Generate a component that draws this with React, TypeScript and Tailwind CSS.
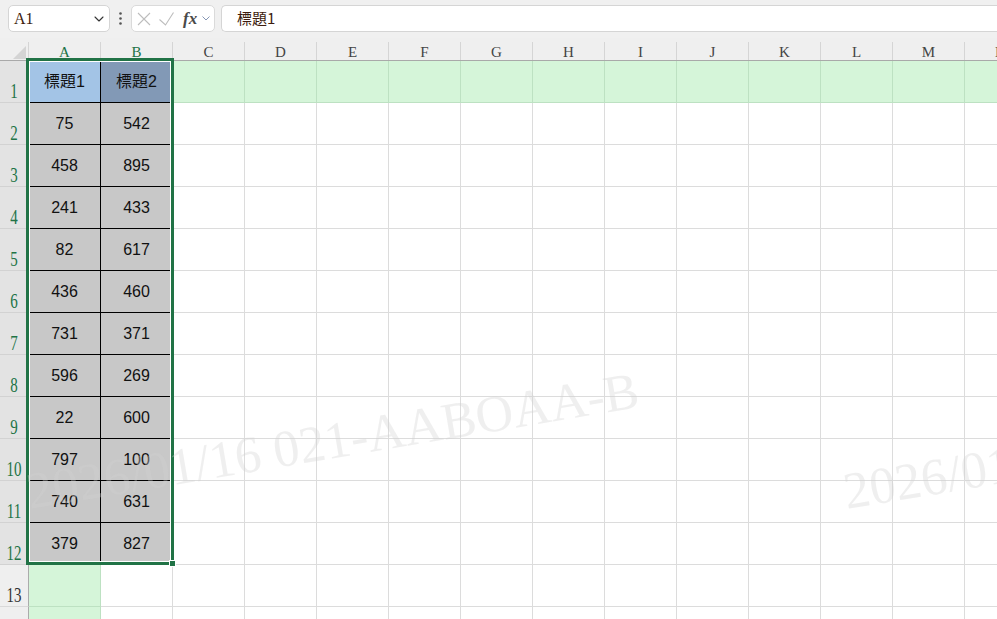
import React from 'react';
import { ChevronDown } from 'lucide-react';

const COLUMNS = ['A', 'B', 'C', 'D', 'E', 'F', 'G', 'H', 'I', 'J', 'K', 'L', 'M', 'N'];
const ROW_COUNT = 14;

// sheet contents, A1:B12
const values: string[][] = [
  ['標題1', '標題2'],
  ['75', '542'],
  ['458', '895'],
  ['241', '433'],
  ['82', '617'],
  ['436', '460'],
  ['731', '371'],
  ['596', '269'],
  ['22', '600'],
  ['797', '100'],
  ['740', '631'],
  ['379', '827'],
];

const SERIF = "font-['Liberation_Serif',serif]";

// fill + gridline colour of one cell (row is 1-based, col 0-based)
function cellClass(row: number, col: number): string {
  if (row === 1 && col === 0) return 'bg-[#a3c4e6] border-black';
  if (row === 1 && col === 1) return 'bg-[#8299b6] border-black';
  if (row <= 12 && col <= 1) return 'bg-[#c8c8c8] border-black';
  // focus-cell highlight for the active row / column
  if (row === 1 || col === 0) return 'bg-[#d5f5d9] border-[#bde1c2]';
  return 'bg-white border-[#dcdcdc]';
}

const FormulaBar: React.FC = () => (
  <div className="h-[38px] bg-[#f0f0f0] flex items-start pt-[5px]">
    <div className="ml-[8px] w-[102px] h-[27px] rounded-[5px] border border-[#d5d5d5] bg-white flex items-center pl-[5px] pr-[2px]">
      <span className={`flex-1 text-[16px] leading-none text-[#3d1c0e] ${SERIF}`}>A1</span>
      <ChevronDown size={16} strokeWidth={1.6} className="text-[#333]" />
    </div>
    <div className="w-[21px] h-[27px] flex items-center justify-center">
      <svg width="3" height="13" viewBox="0 0 3 13">
        <circle cx="1.5" cy="1.5" r="1.3" fill="#555" />
        <circle cx="1.5" cy="6.5" r="1.3" fill="#555" />
        <circle cx="1.5" cy="11.5" r="1.3" fill="#555" />
      </svg>
    </div>
    <div className="w-[84px] h-[27px] rounded-[5px] border border-[#dadada] bg-white flex items-center">
      <svg className="ml-[5px]" width="14" height="14" viewBox="0 0 14 14">
        <path d="M1 1 13 13M13 1 1 13" stroke="#bdbdbd" strokeWidth="1.1" fill="none" />
      </svg>
      <svg className="ml-[8px]" width="15" height="14" viewBox="0 0 15 14">
        <path d="M0.5 7.5 6.5 13 14.5 0.5" stroke="#bdbdbd" strokeWidth="1.1" fill="none" />
      </svg>
      <span className={`ml-[9px] text-[17px] leading-none italic font-semibold text-[#4a4a4a] ${SERIF}`}>fx</span>
      <svg className="ml-[5px]" width="8" height="5" viewBox="0 0 8 5">
        <path d="M0.5 0.5 4 4 7.5 0.5" stroke="#8797b5" strokeWidth="1" fill="none" />
      </svg>
    </div>
    <div className="ml-[6px] flex-1 h-[27px] rounded-l-[5px] border border-r-0 border-[#d5d5d5] bg-white flex items-center pl-[15px] text-[15px] text-[#3d1c0e] font-['Noto_Sans_CJK_TC',sans-serif]">
      標題1
    </div>
  </div>
);

const ColumnHeader: React.FC = () => (
  <div className="flex h-[23px] border-b border-[#a9a9a9] bg-[#efefef]">
    <div className="w-[29px] shrink-0 flex">
      <div className="flex-1 flex items-end justify-end pr-[2px] pb-[1px]">
        <svg width="13" height="13" viewBox="0 0 13 13">
          <polygon points="13,0 13,13 0,13" fill="#d4d4d4" />
        </svg>
      </div>
      <div className="w-px mt-[4px] bg-[#d5d5d5]" />
    </div>
    {COLUMNS.map((c, i) => (
      <div key={c} className="w-[72px] shrink-0 flex">
        <div
          className={`flex-1 flex items-end justify-center text-[15px] leading-none ${SERIF} ${
            i < 2 ? 'text-[#217346]' : 'text-[#444]'
          }`}
        >
          {c}
        </div>
        <div className="w-px mt-[4px] bg-[#d5d5d5]" />
      </div>
    ))}
  </div>
);

const App: React.FC = () => {
  return (
    <div className="relative w-[997px] h-[619px] overflow-hidden bg-white font-['Liberation_Sans','Noto_Sans_CJK_TC',sans-serif]">
      <FormulaBar />

      <div className="relative">
        <ColumnHeader />

        {Array.from({ length: ROW_COUNT }, (_, idx) => {
          const row = idx + 1;
          const selected = row <= 12;
          return (
            <div key={row} className="flex h-[42px]">
              <div
                className={`w-[29px] shrink-0 flex items-end justify-center border-r border-b border-r-[#ababab] ${
                  selected
                    ? 'bg-[#e3e3e3] text-[#217346] border-b-[#d2d2d2]'
                    : 'bg-[#efefef] text-[#333] border-b-[#d9d9d9]'
                }`}
              >
                <span className={`inline-block origin-bottom scale-y-[1.35] text-[15px] leading-none ${SERIF}`}>
                  {row}
                </span>
              </div>
              {COLUMNS.map((c, col) => (
                <div
                  key={c}
                  className={`w-[72px] shrink-0 border-r border-b flex items-center justify-center text-[16px] text-[#111] ${cellClass(
                    row,
                    col
                  )}`}
                >
                  {values[row - 1]?.[col] ?? ''}
                </div>
              ))}
            </div>
          );
        })}

        {/* selection frame around A1:B12 and its fill handle */}
        <div className="absolute left-[26px] top-[20px] w-[148px] h-[507px] border-[3px] border-[#217346] shadow-[inset_0_0_0_1px_#ffffff] pointer-events-none" />
        <div className="absolute left-[169px] top-[522px] w-[7px] h-[7px] bg-[#217346] border border-white" />
      </div>

      {/* watermark */}
      <div className="absolute inset-0 pointer-events-none">
        <div
          className={`absolute left-[30px] top-[466px] origin-[0_44px] -rotate-[9.5deg] whitespace-nowrap text-[52px] leading-none text-[#d0d0d0]/35 ${SERIF}`}
        >
          2026/01/16 021-AABOAA-B
        </div>
        <div
          className={`absolute left-[847px] top-[466px] origin-[0_44px] -rotate-[9.5deg] whitespace-nowrap text-[52px] leading-none text-[#d0d0d0]/35 ${SERIF}`}
        >
          2026/01/16 021-AABOAA-B
        </div>
      </div>
    </div>
  );
};

export default App;
